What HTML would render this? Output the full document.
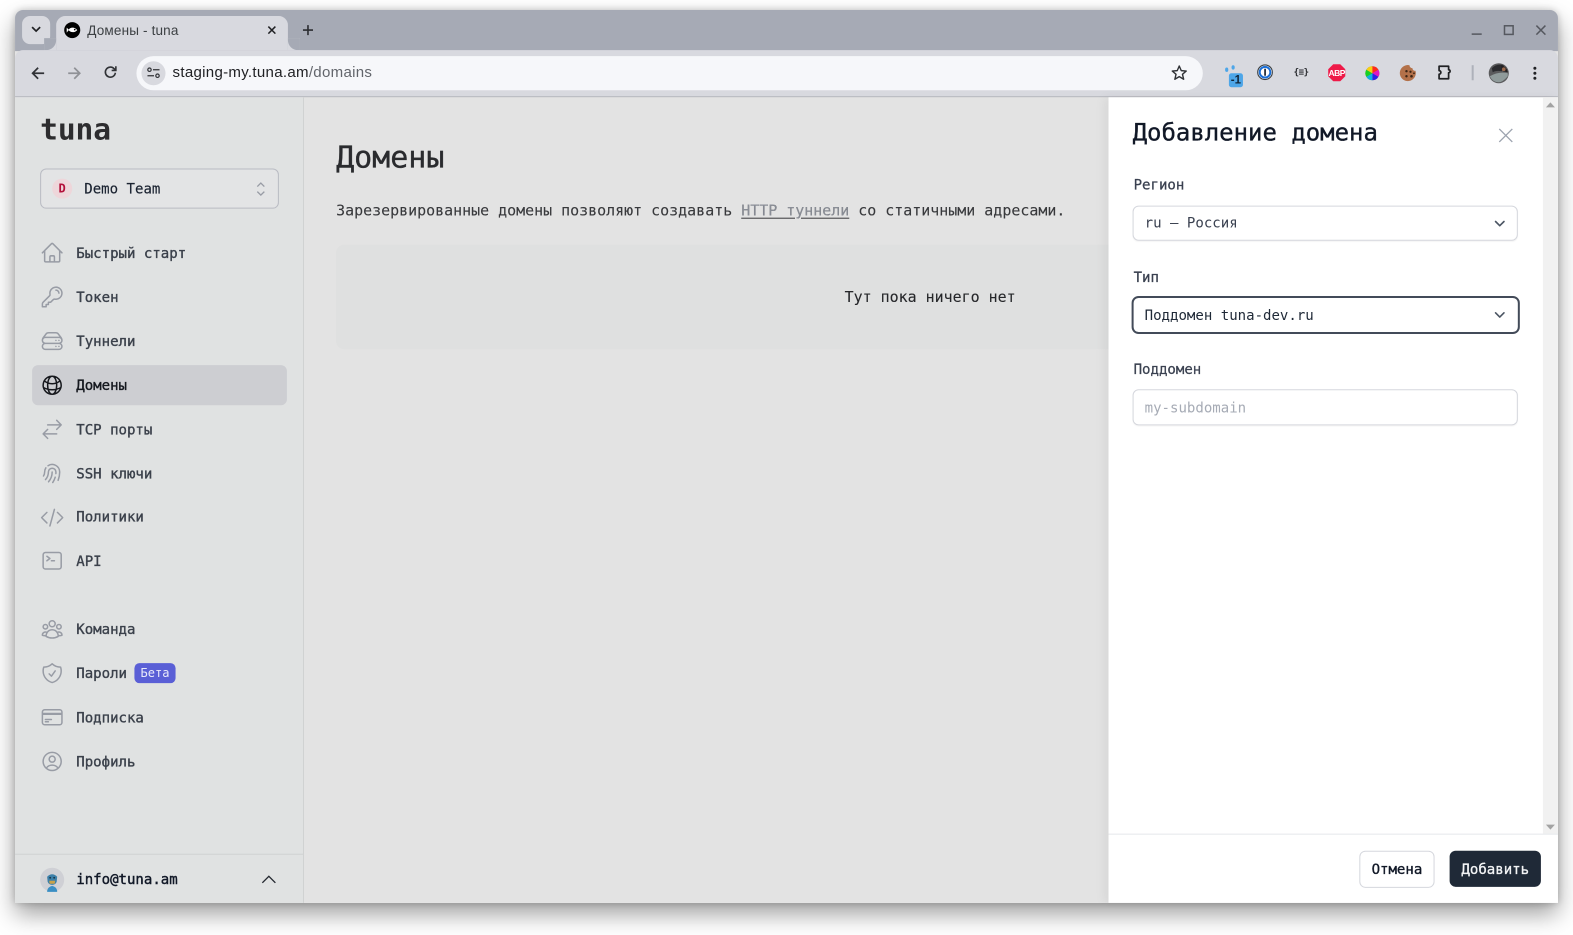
<!DOCTYPE html>
<html lang="ru"><head><meta charset="utf-8"><title>Домены - tuna</title>
<style>
*{box-sizing:border-box}
html,body{margin:0;padding:0;width:1573px;height:935px;overflow:hidden;background:#fff}
#root{position:absolute;left:0;top:0;width:1568px;height:932px;transform:scale(1.00319);transform-origin:0 0}
#win{position:absolute;left:15px;top:10px;width:1538px;height:890px;border-radius:8px 8px 0 0;overflow:hidden;background:#e3e3e3}
#shadow{position:absolute;left:15px;top:10px;width:1538px;height:890px;border-radius:8px 8px 0 0;box-shadow:0 11px 24px rgba(0,0,0,.38),0 0 8px rgba(0,0,0,.2)}
.a{position:absolute}
.t{position:absolute;white-space:pre;line-height:20px;height:20px;font-family:"DejaVu Sans Mono","Liberation Mono",monospace;font-size:14px;color:#111827}
.n{color:#3b414b;left:76px;-webkit-text-stroke:.35px #3b414b}
.l{-webkit-text-stroke:.25px #3a4150}
.s{position:absolute;white-space:pre;line-height:20px;height:20px;font-family:"Liberation Sans",sans-serif}
svg{position:absolute;display:block;overflow:visible}
.i{width:24px;height:24px;left:40px;fill:none;stroke:#989ca5;stroke-width:1.5;stroke-linecap:round;stroke-linejoin:round}
.box{position:absolute;left:1129px;width:384px;border:1px solid #d5d7dd;border-radius:6px;background:#fff;box-shadow:0 1px 1px rgba(0,0,0,.04)}
.c{fill:none;stroke:#4b5563;stroke-width:1.6;stroke-linecap:round;stroke-linejoin:round}
</style></head><body>
<div id="root">
<div id="shadow"></div>
<div id="win"></div>

<!-- tab strip -->
<div class="a" style="left:15px;top:10px;width:1538px;height:41px;background:#a6aab5;border-radius:8px 8px 0 0"></div>
<div class="a" style="left:22px;top:16px;width:28px;height:28px;border-radius:8px;background:#d8d9df"></div>
<svg style="left:31px;top:26px" width="10" height="7" viewBox="0 0 10 7"><path d="M1 1l4 4 4-4" fill="none" stroke="#202124" stroke-width="1.7"/></svg>
<div class="a" style="left:56px;top:16px;width:231px;height:34px;border-radius:9px 9px 0 0;background:#d8d9df"></div>
<div class="a" style="left:44px;top:38px;width:12px;height:12px;background:#d8d9df"></div>
<div class="a" style="left:44px;top:38px;width:12px;height:12px;background:#a6aab5;border-radius:0 0 10px 0"></div>
<div class="a" style="left:287px;top:38px;width:12px;height:12px;background:#d8d9df"></div>
<div class="a" style="left:287px;top:38px;width:12px;height:12px;background:#a6aab5;border-radius:0 0 0 10px"></div>
<svg style="left:64px;top:22px" width="16" height="16" viewBox="0 0 16 16"><circle cx="8" cy="8" r="8" fill="#000"/><path d="M2.500 5.500l2 2c1.500-2.500 6-3 8.500.5-2.500 3-7 2.500-8.500 0l-2 2.500z" fill="#fff"/><circle cx="10.500" cy="7.500" r=".8" fill="#000"/></svg>
<div class="s" style="left:87px;top:20.500px;font-size:13.500px;letter-spacing:.15px;color:#3c4043">Домены - tuna</div>
<svg style="left:267px;top:26px" width="8" height="8" viewBox="0 0 8 8"><path d="M.5.500l7 7M7.500.500l-7 7" stroke="#202124" stroke-width="1.500"/></svg>
<svg style="left:302px;top:25px" width="10" height="10" viewBox="0 0 10 10"><path d="M5 0v10M0 5h10" stroke="#2b2d31" stroke-width="1.600"/></svg>
<svg style="left:1467px;top:33px" width="10" height="2" viewBox="0 0 10 2"><path d="M0 1h10" stroke="#55585f" stroke-width="1.500"/></svg>
<svg style="left:1499px;top:25px" width="10" height="10" viewBox="0 0 10 10"><rect x=".7" y=".7" width="8.600" height="8.600" fill="none" stroke="#55585f" stroke-width="1.500"/></svg>
<svg style="left:1531px;top:25px" width="10" height="10" viewBox="0 0 10 10"><path d="M.5.500l9 9M9.500.500l-9 9" stroke="#55585f" stroke-width="1.500"/></svg>

<!-- toolbar -->
<div class="a" style="left:15px;top:50px;width:1538px;height:47px;background:#d8d9df;border-radius:8px 8px 0 0;border-bottom:1px solid #a9abb2"></div>
<svg style="left:31px;top:66px" width="14" height="14" viewBox="0 0 14 14"><path d="M13 7H2M7 1.500L1.500 7 7 12.500" fill="none" stroke="#303236" stroke-width="1.700"/></svg>
<svg style="left:67px;top:66px" width="14" height="14" viewBox="0 0 14 14"><path d="M1 7h11M7 1.500L12.500 7 7 12.500" fill="none" stroke="#8f9196" stroke-width="1.700"/></svg>
<svg style="left:103px;top:65px" width="14" height="14" viewBox="0 0 14 14"><path d="M12 7.500A5 5 0 1 1 10.500 3.300L12.500 5M12.500 1v4.200H8.300" fill="none" stroke="#303236" stroke-width="1.600"/></svg>
<div class="a" style="left:136px;top:56px;width:1063px;height:34px;border-radius:17px;background:#f6f7fa"></div>
<div class="a" style="left:141px;top:61px;width:24px;height:24px;border-radius:12px;background:#d8d9df"></div>
<svg style="left:146px;top:67px" width="14" height="12" viewBox="0 0 14 12"><circle cx="3" cy="2.500" r="1.700" fill="none" stroke="#303236" stroke-width="1.200"/><path d="M6.500 2.500H13M1 8.500h6.500" stroke="#303236" stroke-width="1.300"/><circle cx="11" cy="8.500" r="1.700" fill="none" stroke="#303236" stroke-width="1.200"/></svg>
<div class="s" style="left:172px;top:63px;font-size:15px;letter-spacing:.29px;color:#202124">staging-my.tuna.am<span style="color:#62656b">/domains</span></div>
<svg style="left:1167px;top:64px" width="17" height="17" viewBox="0 0 17 17"><path d="M8.500 1.800l2 4.600 5 .4-3.800 3.300 1.200 4.900-4.400-2.600-4.400 2.600 1.200-4.900L1.500 6.800l5-.4z" fill="none" stroke="#303236" stroke-width="1.400" stroke-linejoin="round"/></svg>
<!-- extensions -->
<svg style="left:1220px;top:64px" width="20" height="24" viewBox="0 0 20 24"><ellipse cx="2.800" cy="5.500" rx="1.600" ry="2.200" fill="#4ea6e8"/><ellipse cx="9.200" cy="3.200" rx="1.600" ry="2.200" fill="#4ea6e8"/><rect x="5" y="9" width="14" height="14" rx="2.500" fill="#4ea6e8"/></svg>
<div class="s" style="left:1226px;top:70px;font-size:11.500px;font-weight:bold;color:#12263a;width:12px;text-align:center">-1</div>
<svg style="left:1253px;top:64px" width="16" height="16" viewBox="0 0 16 16"><circle cx="8" cy="8" r="7.300" fill="#fff" stroke="#3c4043" stroke-width="1.100"/><circle cx="8" cy="8" r="5.300" fill="#fff" stroke="#1a6fd8" stroke-width="2"/><rect x="7.200" y="4.500" width="1.700" height="7" fill="#1d2430"/></svg>
<div class="t" style="left:1289px;top:63px;font-size:9px;width:16px;text-align:center;font-weight:bold;color:#2a2c30;letter-spacing:-.4px">{≡}</div>
<svg style="left:1324px;top:64px" width="17" height="17" viewBox="0 0 17 17"><path d="M5 0h7l5 5v7l-5 5H5l-5-5V5z" fill="#ee1a48"/></svg>
<div class="s" style="left:1324px;top:63px;font-size:8.500px;font-weight:bold;color:#fff;width:17px;text-align:center;letter-spacing:-.5px">ABP</div>
<svg style="left:1361px;top:66px" width="14" height="14" viewBox="-7 -7 14 14"><circle r="7" fill="#888"/><path d="M0 0V-7A7 7 0 0 1 6 -3.500z" fill="#ff2a1a"/><path d="M0 0L6-3.500A7 7 0 0 1 6 3.500z" fill="#e018c0"/><path d="M0 0L6 3.500A7 7 0 0 1 0 7z" fill="#3020e8"/><path d="M0 0V7A7 7 0 0 1 -6 3.500z" fill="#10b0e0"/><path d="M0 0L-6 3.500A7 7 0 0 1 -6 -3.500z" fill="#18d020"/><path d="M0 0L-6-3.500A7 7 0 0 1 0-7z" fill="#f8d010"/></svg>
<svg style="left:1397px;top:65px" width="16" height="16" viewBox="0 0 16 16"><path d="M8 0a3 3 0 0 0 3 3 2.500 2.500 0 0 0 3 2.500A8 8 0 1 1 8 0z" fill="#b3714a"/><circle cx="5" cy="6" r="1.200" fill="#3a2415"/><circle cx="9" cy="6.500" r="1.100" fill="#3a2415"/><circle cx="5" cy="11" r="1.200" fill="#3a2415"/><circle cx="10" cy="11" r="1.300" fill="#3a2415"/><circle cx="12.500" cy="8" r=".9" fill="#3a2415"/></svg>
<svg style="left:1433px;top:64px" width="16" height="16" viewBox="0 0 16 16"><path d="M1.500 2h9.500v3.500a1.500 1.500 0 0 1 0 3V14.500H1.500V10a1.800 1.800 0 0 0 0-3.600z" fill="none" stroke="#202124" stroke-width="1.700" stroke-linejoin="round"/></svg>
<div class="a" style="left:1467px;top:65px;width:2px;height:15px;background:#aeb1ba"></div>
<svg style="left:1484px;top:63px" width="20" height="20" viewBox="0 0 20 20"><circle cx="10" cy="10" r="10" fill="#5a5a5c"/><path d="M1 13q9-5 18-3v3q-5 6-9 6-6 0-9-6z" fill="#8f9a9a"/><path d="M3 5q5-5 12-3l-2 6q-6-1-9 1z" fill="#2a2a2e"/><path d="M12 2q6 1 7 7l-5-1z" fill="#231f20"/><circle cx="15" cy="6" r="1.800" fill="#9c6a4e"/></svg>
<svg style="left:1528px;top:66px" width="4" height="14" viewBox="0 0 4 14"><circle cx="2" cy="2" r="1.500" fill="#202124"/><circle cx="2" cy="7" r="1.500" fill="#202124"/><circle cx="2" cy="12" r="1.500" fill="#202124"/></svg>

<!-- sidebar -->
<div class="a" style="left:15px;top:97px;width:288px;height:803px;background:#e0e2e2;border-right:1px solid #cfd1d2"></div>
<div class="t" style="left:40px;top:114px;height:30px;line-height:30px;font-size:29.500px;font-weight:bold;color:#2d2d2f;letter-spacing:-.1px">tuna</div>
<div class="a" style="left:40px;top:168px;width:238px;height:40px;border:1px solid #b9bbc3;border-radius:6px;background:#e3e4e5"></div>
<div class="a" style="left:52px;top:178px;width:20px;height:20px;border-radius:10px;background:#eed6da"></div>
<div class="t" style="left:52px;top:178px;width:20px;text-align:center;font-size:12px;font-weight:bold;color:#b3103a">D</div>
<div class="t" style="left:84px;top:179px;color:#1a2230;-webkit-text-stroke:.15px #1a2230">Demo Team</div>
<svg style="left:255px;top:181px" width="10" height="15" viewBox="0 0 10 15"><path d="M1.500 5L5 1.500 8.500 5M1.500 10L5 13.500 8.500 10" fill="none" stroke="#989ca5" stroke-width="1.300"/></svg>

<div class="a" style="left:32px;top:364px;width:254px;height:40px;border-radius:6px;background:#cdced2"></div>

<svg class="i" style="top:240px" viewBox="0 0 24 24"><path d="M2.250 12l8.954-8.955c.44-.439 1.152-.439 1.591 0L21.750 12M4.500 9.750v10.125c0 .621.504 1.125 1.125 1.125H9.750v-4.875c0-.621.504-1.125 1.125-1.125h2.250c.621 0 1.125.504 1.125 1.125V21h4.125c.621 0 1.125-.504 1.125-1.125V9.750M8.250 21h8.250"/></svg>
<svg class="i" style="top:284px" viewBox="0 0 24 24"><path d="M15.750 5.250a3 3 0 013 3m3 0a6 6 0 01-7.029 5.912c-.563-.097-1.159.026-1.563.43L10.500 17.250H8.250v2.250H6v2.250H2.250v-2.818c0-.597.237-1.170.659-1.591l6.499-6.499c.404-.404.527-1 .43-1.563A6 6 0 1121.750 8.250z"/></svg>
<svg class="i" style="top:328px" viewBox="0 0 24 24"><path d="M5.250 14.250h13.500m-13.500 0a3 3 0 01-3-3m3 3a3 3 0 100 6h13.500a3 3 0 100-6m-16.500-3a3 3 0 013-3h13.500a3 3 0 013 3m-19.500 0a4.500 4.500 0 01.9-2.700L5.737 5.100a3.375 3.375 0 012.700-1.350h7.126c1.062 0 2.062.5 2.700 1.350l2.587 3.450a4.500 4.500 0 01.9 2.700m0 0a3 3 0 01-3 3m0 3h.008v.008h-.008v-.008zm0-6h.008v.008h-.008v-.008zm-3 6h.008v.008h-.008v-.008zm0-6h.008v.008h-.008v-.008z"/></svg>
<svg class="i" style="top:372px;stroke:#16181d" viewBox="0 0 24 24"><path d="M12 21a9.004 9.004 0 008.716-6.747M12 21a9.004 9.004 0 01-8.716-6.747M12 21c2.485 0 4.500-4.030 4.500-9S14.485 3 12 3m0 18c-2.485 0-4.500-4.030-4.500-9S9.515 3 12 3m0 0a8.997 8.997 0 017.843 4.582M12 3a8.997 8.997 0 00-7.843 4.582m15.686 0A11.953 11.953 0 0112 10.500c-2.998 0-5.740-1.100-7.843-2.918m15.686 0A8.959 8.959 0 0121 12c0 .778-.099 1.533-.284 2.253m0 0A17.919 17.919 0 0112 16.500c-3.162 0-6.133-.815-8.716-2.247m0 0A9.015 9.015 0 013 12c0-1.605.42-3.113 1.157-4.418"/></svg>
<svg class="i" style="top:416px" viewBox="0 0 24 24"><path d="M7.500 21L3 16.500m0 0L7.500 12M3 16.500h13.500m0-13.500L21 7.500m0 0L16.500 12M21 7.500H7.500"/></svg>
<svg class="i" style="top:460px" viewBox="0 0 24 24"><path d="M7.864 4.243A7.500 7.500 0 0119.500 10.500c0 2.920-.556 5.709-1.568 8.268M5.742 6.364A7.465 7.465 0 004.500 10.500a7.464 7.464 0 01-1.150 3.993m1.989 3.559A11.209 11.209 0 008.250 10.500a3.750 3.750 0 117.500 0c0 .527-.021 1.049-.064 1.565M12 10.500a14.940 14.940 0 01-3.600 9.750m6.633-4.596a18.666 18.666 0 01-2.485 5.330"/></svg>
<svg class="i" style="top:504px" viewBox="0 0 24 24"><path d="M17.250 6.750L22.500 12l-5.250 5.250m-10.500 0L1.500 12l5.250-5.250m7.500-3l-4.500 16.500"/></svg>
<svg class="i" style="top:547px" viewBox="0 0 24 24"><path d="M6.750 7.500l3 2.250-3 2.250m4.500 0h3m-9 8.250h13.500A2.250 2.250 0 0021 18V6a2.250 2.250 0 00-2.250-2.250H5.250A2.250 2.250 0 003 6v12a2.250 2.250 0 002.250 2.250z"/></svg>
<svg class="i" style="top:615px" viewBox="0 0 24 24"><path d="M18 18.720a9.094 9.094 0 003.741-.479 3 3 0 00-4.682-2.720m.94 3.198l.001.031c0 .225-.012.447-.037.666A11.944 11.944 0 0112 21c-2.170 0-4.207-.576-5.963-1.584A6.062 6.062 0 016 18.719m12 0a5.971 5.971 0 00-.941-3.197m0 0A5.995 5.995 0 0012 12.750a5.995 5.995 0 00-5.058 2.772m0 0a3 3 0 00-4.681 2.720 8.986 8.986 0 003.740.477m.94-3.197a5.971 5.971 0 00-.94 3.197M15 6.750a3 3 0 11-6 0 3 3 0 016 0zm6 3a2.250 2.250 0 11-4.500 0 2.250 2.250 0 014.500 0zm-13.500 0a2.250 2.250 0 11-4.500 0 2.250 2.250 0 014.500 0z"/></svg>
<svg class="i" style="top:659px" viewBox="0 0 24 24"><path d="M9 12.750L11.250 15 15 9.750m-3-7.036A11.959 11.959 0 013.598 6 11.990 11.990 0 003 9.749c0 5.592 3.824 10.290 9 11.623 5.176-1.332 9-6.030 9-11.622 0-1.310-.21-2.571-.598-3.751h-.152c-3.196 0-6.100-1.248-8.250-3.285z"/></svg>
<svg class="i" style="top:703px" viewBox="0 0 24 24"><path d="M2.250 8.250h19.500M2.250 9h19.500m-16.500 5.250h6m-6 2.250h3m-3.750 3h15a2.250 2.250 0 002.250-2.250V6.750A2.250 2.250 0 0019.500 4.500h-15a2.250 2.250 0 00-2.250 2.250v10.500A2.250 2.250 0 004.500 19.500z"/></svg>
<svg class="i" style="top:747px" viewBox="0 0 24 24"><path d="M17.982 18.725A7.488 7.488 0 0012 15.750a7.488 7.488 0 00-5.982 2.975m11.963 0a9 9 0 10-11.963 0m11.963 0A8.966 8.966 0 0112 21a8.966 8.966 0 01-5.982-2.275M15 9.750a3 3 0 11-6 0 3 3 0 016 0z"/></svg>

<div class="t n" style="top:243px">Быстрый старт</div>
<div class="t n" style="top:287px">Токен</div>
<div class="t n" style="top:331px">Туннели</div>
<div class="t n" style="top:375px;color:#15181f;-webkit-text-stroke-color:#15181f">Домены</div>
<div class="t n" style="top:419px">TCP порты</div>
<div class="t n" style="top:463px">SSH ключи</div>
<div class="t n" style="top:506px">Политики</div>
<div class="t n" style="top:550px">API</div>
<div class="t n" style="top:618px">Команда</div>
<div class="t n" style="top:662px">Пароли</div>
<div class="a" style="left:134px;top:661px;width:41px;height:20px;border-radius:5px;background:#5a5fd6"></div>
<div class="t" style="left:134px;top:661px;width:41px;text-align:center;font-size:12px;color:#e8e9fa">Бета</div>
<div class="t n" style="top:706px">Подписка</div>
<div class="t n" style="top:750px">Профиль</div>

<div class="a" style="left:15px;top:851px;width:287px;height:1px;background:#cfd1d2"></div>
<div class="a" style="left:40px;top:865px;width:24px;height:24px;border-radius:12px;background:#cfd0d5;overflow:hidden"></div>
<svg style="left:40px;top:865px" width="24" height="24" viewBox="0 0 24 24"><path d="M7 9q5-5 10 0l-.5 5q-1 3-4.500 3t-4.500-3z" fill="#3c7fa8"/><path d="M9 13h6l-.5 3h-5z" fill="#c9a24a"/><path d="M7 24q0-5 5-6 5 1 5 6z" fill="#3a8fc4"/><circle cx="10" cy="10" r=".9" fill="#16303f"/><circle cx="14" cy="10" r=".9" fill="#16303f"/></svg>
<div class="t" style="left:76px;top:866.500px;color:#111827;-webkit-text-stroke:.4px #111827">info@tuna.am</div>
<svg style="left:261px;top:872px" width="14" height="9" viewBox="0 0 14 9"><path d="M.5 8L7 1.500 13.500 8" fill="none" stroke="#23272f" stroke-width="1.300"/></svg>

<!-- main -->
<div class="t" style="left:335px;top:143px;height:30px;line-height:30px;font-size:29.900px;color:#2a2b2e;-webkit-text-stroke:.35px #2a2b2e">Домены</div>
<div class="t" style="left:335px;top:200px;font-size:14.920px;color:#38393c;-webkit-text-stroke:.1px #38393c">Зарезервированные домены позволяют создавать <span style="color:#8a8e97;text-decoration:underline;text-underline-offset:2px">HTTP туннели</span> со статичными адресами.</div>
<div class="a" style="left:335px;top:244px;width:900px;height:104px;border-radius:8px;background:#dfe0e0"></div>
<div class="t" style="left:842px;top:286px;font-size:14.900px;color:#26272a;-webkit-text-stroke:.1px #26272a">Тут пока ничего нет</div>

<!-- panel -->
<div class="a" style="left:1105px;top:97px;width:448px;height:803px;background:#fff;box-shadow:-4px 0 10px rgba(0,0,0,.06)"></div>
<div class="a" style="left:1538px;top:97px;width:15px;height:734px;background:#f1f1f1"></div>
<svg style="left:1541px;top:102px" width="9" height="5" viewBox="0 0 9 5"><path d="M4.500 0L9 5H0z" fill="#a3a3a3"/></svg>
<svg style="left:1541px;top:822px" width="9" height="5" viewBox="0 0 9 5"><path d="M4.500 5L9 0H0z" fill="#a3a3a3"/></svg>
<div class="t" style="left:1129px;top:116.500px;height:30px;line-height:30px;font-size:23.900px;color:#111827;-webkit-text-stroke:.35px #111827">Добавление домена</div>
<svg style="left:1494px;top:128px" width="14" height="14" viewBox="0 0 14 14"><path d="M.5.500l13 13M13.500.500l-13 13" stroke="#9ca3af" stroke-width="1.300"/></svg>

<div class="t l" style="left:1130px;top:175px;color:#3a4150">Регион</div>
<div class="box" style="top:205px;height:35px"></div>
<div class="t" style="left:1141px;top:213px;color:#3a4150">ru – Россия</div>
<svg class="c" style="left:1490px;top:220px" width="10" height="6" viewBox="0 0 10 6"><path d="M.8.800L5 5l4.200-4.200"/></svg>

<div class="t l" style="left:1130px;top:267px;color:#3a4150">Тип</div>
<div class="a" style="left:1128px;top:295px;width:387px;height:38px;border:2px solid #434b59;border-radius:7px;background:#fff"></div>
<div class="t" style="left:1141px;top:305px;color:#1f2937">Поддомен tuna-dev.ru</div>
<svg class="c" style="left:1490px;top:311px" width="10" height="6" viewBox="0 0 10 6"><path d="M.8.800L5 5l4.200-4.200"/></svg>

<div class="t l" style="left:1130px;top:359px;color:#3a4150">Поддомен</div>
<div class="box" style="top:388px;height:36px"></div>
<div class="t" style="left:1141px;top:397px;color:#a6abb5">my-subdomain</div>

<div class="a" style="left:1105px;top:831px;width:448px;height:1px;background:#e5e7eb"></div>
<div class="a" style="left:1355px;top:848px;width:75px;height:37px;border:1px solid #d5d7dd;border-radius:6px;background:#fff"></div>
<div class="t" style="left:1355px;top:857px;width:75px;text-align:center;-webkit-text-stroke:.35px #111827">Отмена</div>
<div class="a" style="left:1445px;top:848px;width:91px;height:36px;border-radius:6px;background:#1f2937"></div>
<div class="t" style="left:1445px;top:857px;width:91px;text-align:center;color:#f3f4f6;-webkit-text-stroke:.3px #f3f4f6">Добавить</div>
</div>
</body></html>
